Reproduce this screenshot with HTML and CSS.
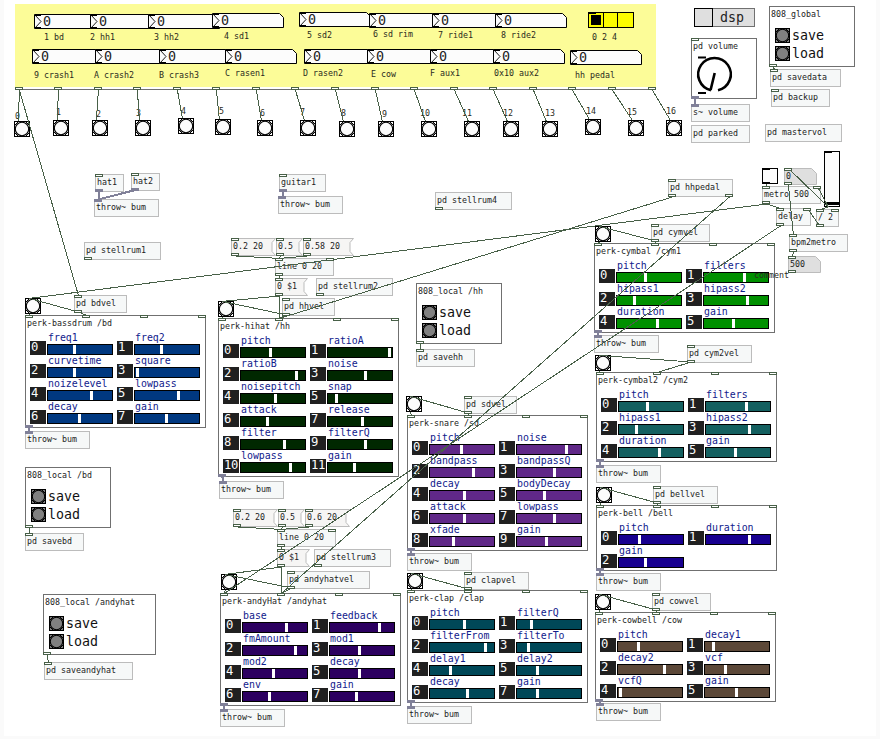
FILE: index.html
```html
<!DOCTYPE html>
<html lang="en">
<head>
<meta charset="utf-8">
<title>808 drum patch</title>
<link rel="stylesheet" href="styles.css">
</head>
<body>
<main class="patch" id="patch">
  <div class="pads"></div>
  <div class="node dsp"><span class="dsp-box"></span><span class="dsp-label">dsp</span></div>
  <div class="node volume">
    <div class="title">pd volume</div>
    <svg class="knob" width="66" height="61" viewBox="0 0 66 61">
      <path d="M7 19.5h8M7 55h8" stroke="#000" stroke-width="1.8"/>
      <path d="M20 52.2A16.3 16.3 0 1 1 27 52.2M23.7 35L19.6 52" fill="none" stroke="#000" stroke-width="2.6"/>
    </svg>
  </div>
  <div class="node radio"><span class="on"></span><span></span><span></span></div>
  <div class="node vslider"></div>
  <div class="node toggle"></div>
</main>
<script src="script.js"></script>
</body>
</html>
```
FILE: styles.css
```css
* { box-sizing: border-box; }
body {
  margin: 0;
  width: 880px;
  height: 739px;
  overflow: hidden;
  background: #fafafa;
  font-family: "DejaVu Sans Mono", monospace;
  font-size: 8.3px;
  color: #1c1c1c;
}
.patch {
  position: relative;
  width: 872px;
  height: 736px;
  margin-left: 4px;
  background: #fff;
}
/* canvas origin is the window corner, the sheet starts 4px in */
.node, .pads, .cables { position: absolute; margin-left: -4px; }
.pads {
  left: 15px; top: 4px; width: 641px; height: 86px;
  background: #fcfc98;
  border-bottom: 1px solid #707070;
  box-shadow: inset 0 -2px #fff;
}
.obj {
  height: 18px;
  padding-left: 1px;
  border: 1px solid #bcbcbc;
  background: #f6f8f8;
  line-height: 14px;
  white-space: pre;
}
.shape { height: 18px; line-height: 16px; padding-left: 2px; white-space: pre; }
.shape svg, .numbox svg { position: absolute; left: 0; top: 0; }
.shape span, .numbox span { position: relative; }
.numbox { width: 72px; height: 15px; font-size: 13.4px; line-height: 16px; padding-left: 9px; color: #222; }
.text { line-height: 10px; white-space: pre; color: #2a2a20; }
.bang { width: 16px; height: 16px; }
.bang svg, .row svg { display: block; }
.panel, .saver, .volume { border: 1px solid #707070; background: #fff; }
.title { height: 14px; padding-left: 1px; line-height: 14px; white-space: pre; }
.panel { width: 181px; }
.params {
  display: grid;
  grid-template-columns: 83px 83px;
  gap: 0 4px;
  margin: 2px 0 0 4px;
}
.param {
  display: grid;
  grid-template-columns: 16px 66px;
  grid-template-rows: 9px 3px 11px;
  column-gap: 1px;
}
.label { grid-area: 1 / 2 / 3 / 3; padding-left: 1px; font-size: 9.9px; line-height: 12.5px; color: #10208c; white-space: nowrap; }
.index { grid-area: 2 / 1 / 4 / 2; background: #202020; color: #fcfcfc; font-size: 12.2px; line-height: 12px; padding-left: 1px; letter-spacing: -0.3px; }
.slider { grid-area: 3 / 2 / 4 / 3; border: 1px solid #000; background: var(--fill); }
.handle { display: block; width: 3px; height: 9px; margin-left: -1px; background: #fff; }
.saver { height: 61px; }
.row { display: flex; gap: 2px; height: 15px; margin: 0 0 3px 5px; font-size: 13.3px; line-height: 16px; color: #111; }
.title + .row { margin-top: 7px; }
.dsp { left: 694px; top: 8px; width: 61px; height: 19px; display: flex; background: #dfdfdf; border: 1px solid #707070; border-left: 0; }
.dsp-box { width: 19px; height: 19px; margin-top: -1px; border: 1px solid #000; }
.dsp-label { padding-left: 7px; font-size: 13.3px; line-height: 17px; color: #222; }
.volume { left: 691px; top: 38px; width: 66px; height: 61px; }
.knob { position: absolute; left: -1px; top: -1px; }
.radio { left: 588px; top: 12px; display: flex; width: 46px; height: 16px; border: 1px solid #000; background: #fcfc00; }
.radio span { width: 15px; border-right: 1px solid #000; }
.radio span:last-child { border: 0; }
.radio .on { background: linear-gradient(#000, #000) 2px 2px / 10px 10px no-repeat, linear-gradient(#000, #000) 0 0 / 7px 1px no-repeat; }
.vslider { left: 824px; top: 151px; width: 16px; height: 56px; border: 1px solid #000; background: linear-gradient(#000, #000) 0 50px / 14px 3px no-repeat, linear-gradient(#000, #000) 0 0 / 7px 1px no-repeat, #fcfcfc; }
.toggle { left: 762px; top: 168px; width: 16px; height: 16px; border: 1px solid #000; background: linear-gradient(#000, #000) 0 0 / 7px 1px no-repeat, linear-gradient(#000, #000) 0 13px / 7px 1px no-repeat, #fcfcfc; }
.cables { left: 0; top: 0; pointer-events: none; }
```
FILE: script.js
```js
const patch = document.getElementById('patch');
const cables = [], ports = [], signals = [];

function node(cls, x, y, w, html) {
  const el = document.createElement('div');
  el.className = 'node ' + cls;
  el.style.left = x + 'px';
  el.style.top = y + 'px';
  if (w) el.style.width = w + 'px';
  el.innerHTML = html;
  patch.appendChild(el);
  return el;
}
const port = (x, y) => ports.push([x, y]);
const cable = (...p) => cables.push(p);

// io: i/o left inlet/outlet, I/O right inlet/outlet, s/t signal inlet/outlet
function drawPorts(io, x, y, w, h) {
  if (io.includes('i')) port(x, y);
  if (io.includes('I')) port(x + w - 8, y);
  if (io.includes('o')) port(x, y + h - 3);
  if (io.includes('O')) port(x + w - 8, y + h - 3);
  if (io.includes('s')) signals.push([x, y]);
  if (io.includes('t')) signals.push([x, y + h - 3]);
}
function obj(text, x, y, io = '') {
  const w = text.length * 6 + 5;
  node('obj', x, y, w, text);
  drawPorts(io, x, y, w, 18);
}
function message(text, x, y) {
  const w = text.length * 6 + 9;
  node('shape', x, y, w, `<svg width="${w}" height="18"><path d="M.5.5H${w - .5}L${w - 4} 4.5V13.5L${w - .5} 17.5H.5Z" fill="#f6f5f4" stroke="#bcbcbc"/></svg><span>${text}</span>`);
  drawPorts('io', x, y, w, 18);
}
function atom(text, x, y) {
  node('shape', x, y, 33, `<svg width="33" height="17"><path d="M.5.5H27.5L32.5 5.5V16.5H.5Z" fill="#dfdfdf" stroke="#bcbcbc"/></svg><span>${text}</span>`);
  drawPorts('io', x, y, 33, 17);
}
function numbox(x, y) {
  node('numbox', x, y, 0, '<svg width="72" height="15"><path d="M.5.5H67.5L71.5 4.5V14.5H.5Z" fill="#fcfcfc" stroke="#000"/><path d="M1 1L7 7.5L1 14" fill="none" stroke="#000" stroke-width=".9"/><path d="M0 1.5H7M0 13.5H7" stroke="#000"/></svg><span>0</span>');
}
const bangIcon = (s, fill) => `<svg width="${s}" height="${s}"><rect x=".5" y=".5" width="${s - 1}" height="${s - 1}" fill="${fill}" stroke="#000"/><path d="M1 4L4 1M${s - 4} 1L${s - 1} 4M1 ${s - 4}L4 ${s - 1}M${s - 1} ${s - 4}L${s - 4} ${s - 1}" stroke="#000"/><circle cx="${s / 2}" cy="${s / 2}" r="${s / 2 - 1.3}" fill="${fill}" stroke="#000" stroke-width="1.1"/></svg>`;
const bang = (x, y) => node('bang', x, y, 0, bangIcon(16, '#fcfcfc'));
// text placed by its baseline
const text = (str, x, base) => node('text', x, base - 8, 0, str);

function saver(title, x, y, w) {
  const row = t => `<div class="row">${bangIcon(15, '#808080')}<span>${t}</span></div>`;
  node('saver', x, y, w, `<div class="title">${title}</div>${row('save')}${row('load')}`);
  port(x, y + 58);
}
function panel(title, x, y, h, fill, bangAt, throwAt, params) {
  const cells = params.map(([name, pos], i) =>
    `<div class="param"><span class="label">${name}</span><span class="index">${i}</span><span class="slider"><i class="handle" style="transform:translateX(${pos}px)"></i></span></div>`).join('');
  const el = node('panel', x, y, 0, `<div class="title">${title}</div><div class="params">${cells}</div>`);
  el.style.height = h + 'px';
  el.style.setProperty('--fill', fill);
  [0, 57, 115, 173].forEach(d => port(x + d, y));
  signals.push([x, y + h - 3]);
  bang(...bangAt);
  cable(bangAt[0] + 4, bangAt[1] + 16, x + 4, y);
  obj('throw~ bum', ...throwAt, 's');
  cable(x + 4, y + h, throwAt[0] + 4, throwAt[1], 1);
}

// pad number boxes
[[34,14],[90,14],[148,14],[212,13],[299,12],[369,13],[432,13],[495,13],
 [32,49],[95,49],[159,49],[225,49],[304,49],[367,49],[430,49],[493,49],[570,50]].forEach(p => numbox(...p));
[['1 bd',44,40],['2 hh1',90,40],['3 hh2',154,40],['4 sd1',224,39],['5 sd2',307,38],['6 sd rim',373,37],['7 ride1',438,38],['8 ride2',501,38],['0 2 4',592,40],
 ['9 crash1',34,78],['A crash2',94,78],['B crash3',159,78],['C rasen1',225,76],['D rasen2',303,76],['E cow',371,77],['F aux1',430,76],['0x10 aux2',494,76],['hh pedal',575,78]].forEach(t => text(...t));

// trigger outlets: outlet x, bang x, bang y, label x, label baseline
[[15,14,121,15,119],[54,53,120,56,115],[94,92,120,96,117],[133,135,120,136,116],[173,178,118,181,114],[212,215,119,219,114],[252,257,120,260,116],[291,300,120,300,115],
 [331,339,121,341,116],[371,378,121,382,117],[410,421,121,420,116],[450,464,121,462,116],[489,503,121,503,116],[529,542,121,545,116],[568,585,119,586,114],[608,628,120,627,115],[648,666,120,666,114]]
.forEach(([o, x, y, lx, ly], i) => {
  bang(x, y);
  text(String(i), lx, ly);
  port(o, 87);
  cable(o + 4, 90, x + 4, y);
});

panel('perk-bassdrum /bd', 25, 315, 113, '#003880', [25,298], [25,431],
  [['freq1',26],['freq2',26],['curvetime',26],['square',2],['noizelevel',43],['lowpass',43],['decay',31],['gain',31]]);
panel('perk-hihat /hh', 218, 318, 159, '#002800', [218,301], [219,481],
  [['pitch',29],['ratioA',61],['ratioB',55],['noise',37],['noisepitch',34],['snap',8],['attack',26],['release',34],['filter',43],['filterQ',37],['lowpass',49],['gain',26]]);
panel('perk-snare /sd', 407, 415, 136, '#602888', [406,396], [407,553],
  [['pitch',31],['noise',49],['bandpass',43],['bandpassQ',37],['decay',34],['bodyDecay',27],['attack',34],['lowpass',37],['xfade',23],['gain',29]]);
panel('perk-clap /clap', 407, 590, 113, '#004858', [407,573], [407,706],
  [['pitch',34],['filterQ',14],['filterFrom',55],['filterTo',11],['delay1',20],['delay2',20],['decay',37],['gain',20]]);
panel('perk-andyHat /andyhat', 220, 593, 113, '#2c0060', [221,574], [220,709],
  [['base',43],['feedback',49],['fmAmount',52],['mod1',29],['mod2',30],['decay',29],['env',26],['gain',26]]);
const cym = [['pitch',28],['filters',40],['hipass1',17],['hipass2',43],['duration',40],['gain',29]];
panel('perk-cymbal /cym1', 594, 243, 90, '#009000', [595,226], [594,335], cym);
panel('perk-cymbal2 /cym2', 596, 372, 90, '#146060', [595,355], [596,465], cym);
panel('perk-bell /bell', 596, 505, 66, '#180090', [596,487], [596,573], [['pitch',20],['duration',43],['gain',26]]);
panel('perk-cowbell /cow', 595, 612, 90, '#5c4838', [595,594], [596,703],
  [['pitch',20],['decay1',8],['decay2',46],['vcf',20],['vcfQ',2],['gain',31]]);

saver('808_global', 769, 6, 86);
saver('808_local /hh', 416, 283, 86);
saver('808_local /bd', 25, 467, 86);
saver('808_local /andyhat', 43, 594, 113);

[['pd savedata',770,69,'i'],['pd backup',771,89,'i'],['pd mastervol',765,124],['s~ volume',691,104,'s'],['pd parked',691,125],
 ['hat1',95,174,'it'],['hat2',131,173,'it'],['throw~ bum',94,199,'s'],['guitar1',279,174,'it'],['throw~ bum',278,196,'s'],
 ['pd stellrum1',84,242,'o'],['pd stellrum4',435,192,'o'],['pd stellrum2',316,278,'o'],['pd stellrum3',314,549,'o'],
 ['pd hhpedal',668,179,'ioO'],['metro 500',762,186,'iIo'],['delay',776,208,'iIo'],['/ 2',816,209,'iIo'],['bpm2metro',789,234,'io'],
 ['line 0 20',275,258,'iIo'],['line 0 20',277,529,'iIo'],['pd savehh',416,349,'i'],['pd savebd',25,533,'i'],['pd saveandyhat',44,662,'i']].forEach(o => obj(...o));

// velocity abstractions: text, x, y, bang inlet, panel inlet
[['pd bdvel',74,295,29,298,86,315],['pd hhvel',282,298,222,301,279,318],['pd sdvel',464,396,410,396,468,415],['pd clapvel',464,572,411,573,468,590],
 ['pd andyhatvel',287,571,225,574,281,593],['pd cymvel',651,224,599,226,655,243],['pd cym2vel',687,345,599,355,657,372],['pd bellvel',653,486,600,487,657,505],['pd cowvel',652,593,599,594,656,612]]
.forEach(([t, x, y, bx, by, px, py]) => {
  obj(t, x, y, 'io');
  cable(x + 4, y + 17, bx, by);
  cable(x + 4, y + 17, px, py);
});
[['0.2 20',231,238],['0.5',276,238],['0.58 20',303,238],['0 $1',275,278],['0.2 20',233,509],['0.5',278,509],['0.6 20',305,509],['0 $1',277,549]].forEach(m => message(...m));
atom('0', 784, 168);
atom('500', 788, 256);
text('comment', 754, 278);
port(691, 38);
signals.push([691, 96]);

[[19,90,78,295],[766,204,29,298],[672,197,279,318],[729,197,281,593],[780,226,224,593],
 [235,256,279,258],[280,256,279,258],[307,256,279,258],[279,276,279,278],[279,296,222,301],[279,296,279,318],
 [237,527,281,529],[282,527,281,529],[309,527,281,529],[281,547,281,549],[281,567,225,574],[281,567,281,593],
 [766,184,766,186],[766,204,780,208],[820,227,807,208],[828,207,817,186],[828,207,788,168],[828,207,820,209],[788,185,793,234],[793,252,792,256],
 [773,67,774,69],[420,344,420,349],[29,528,29,533],[47,655,48,662],
 [99,192,98,199,1],[135,190,98,199,1],[283,192,282,196,1],[695,99,695,104,1]].forEach(c => cable(...c));

const svg = cables.map(([a, b, c, d, sig]) =>
  `<path d="M${a + .4} ${b}L${c + .4} ${d + .4}" stroke="${sig ? '#808098' : '#486048'}" stroke-width="${sig ? 2 : 1}"/>`).join('')
  + ports.map(([x, y]) => `<rect x="${x + .5}" y="${y + .5}" width="7" height="2" fill="#fff" stroke="#486048"/>`).join('')
  + signals.map(([x, y]) => `<rect x="${x}" y="${y}" width="8" height="3" fill="#808098"/>`).join('');
patch.insertAdjacentHTML('beforeend', `<svg class="cables" width="880" height="739" shape-rendering="crispEdges">${svg}</svg>`);
```
